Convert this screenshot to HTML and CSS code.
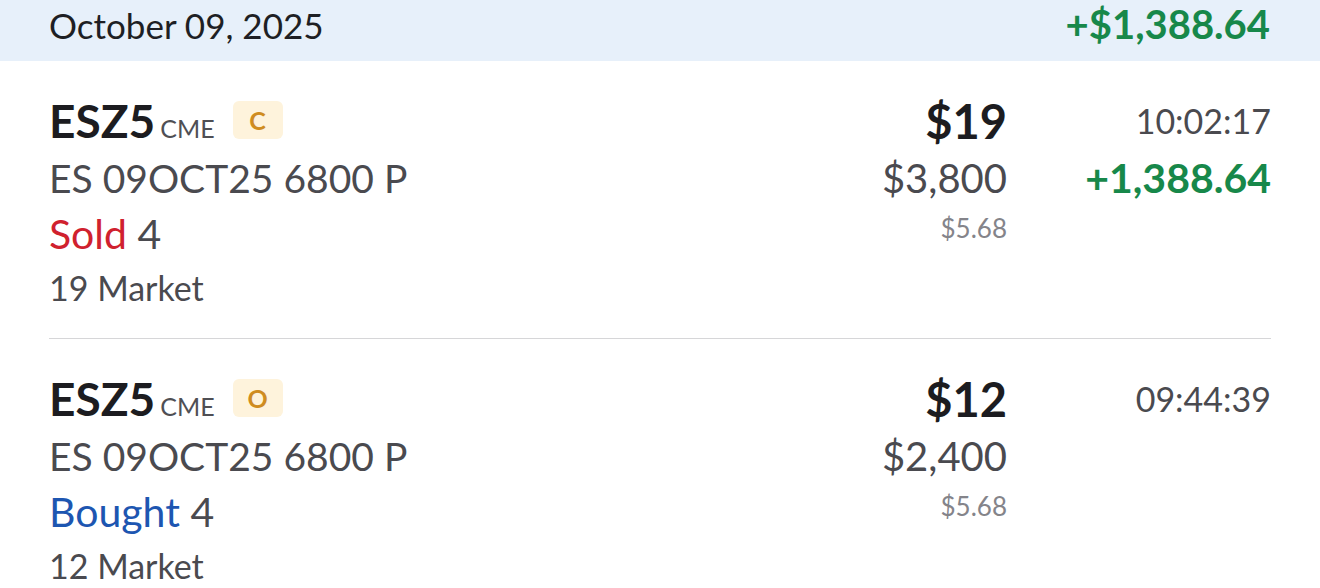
FILE: index.html
```html
<!DOCTYPE html>
<html lang="en">
<head>
<meta charset="utf-8">
<title>Orders</title>
<link rel="stylesheet" href="styles.css">
</head>
<body>
<div class="day-header">
  <span class="day-date">October 09, 2025</span>
  <span class="day-total">+$1,388.64</span>
</div>
<div class="orders">
  <div class="order">
    <div class="col-main">
      <div class="title-line">
        <span class="sym-group"><b class="sym">ESZ5</b><span class="exch">CME</span></span>
        <span class="badge">C</span>
      </div>
      <div class="desc">ES 09OCT25 6800 P</div>
      <div class="side"><span class="sold">Sold</span> 4</div>
      <div class="type">19 Market</div>
    </div>
    <div class="col-price">
      <div class="price">$19</div>
      <div class="amount">$3,800</div>
      <div class="fee">$5.68</div>
    </div>
    <div class="col-time">
      <div class="time">10:02:17</div>
      <div class="pnl">+1,388.64</div>
    </div>
  </div>
  <div class="order">
    <div class="col-main">
      <div class="title-line">
        <span class="sym-group"><b class="sym">ESZ5</b><span class="exch">CME</span></span>
        <span class="badge">O</span>
      </div>
      <div class="desc">ES 09OCT25 6800 P</div>
      <div class="side"><span class="bought">Bought</span> 4</div>
      <div class="type">12 Market</div>
    </div>
    <div class="col-price">
      <div class="price">$12</div>
      <div class="amount">$2,400</div>
      <div class="fee">$5.68</div>
    </div>
    <div class="col-time">
      <div class="time">09:44:39</div>
    </div>
  </div>
</div>
</body>
</html>
```
FILE: styles.css
```css
* { box-sizing: border-box; }
html, body { margin: 0; padding: 0; background: #ffffff; }
body {
  font-family: Lato, "Noto Sans", "Liberation Sans", sans-serif;
  color: #4a4a4f;
  width: 1320px;
  height: 588px;
  overflow: hidden;
}
.day-header {
  height: 61px;
  background: #e7f0fa;
  display: flex;
  justify-content: space-between;
  align-items: baseline;
  padding: 4px 50px 0 49px;
}
.day-date {
  font-size: 35px;
  line-height: 1;
  color: #1e1f24;
}
.day-total {
  font-size: 40px;
  line-height: 1;
  font-weight: 700;
  color: #17884a;
}
.orders {
  padding: 0 49px 0 49px;
}
.order {
  display: grid;
  grid-template-columns: 1fr auto 264px;
  padding: 31px 0 24px 0;
  border-bottom: 1px solid #d6d6d8;
}
.title-line {
  height: 58px;
  display: flex;
  align-items: center;
}
.sym-group {
  font-size: 46px;
  line-height: 1;
}
.sym {
  font-weight: 700;
  color: #1c1c20;
}
.exch {
  font-size: 25px;
  margin-left: 5px;
  color: #4f4f54;
}
.badge {
  margin-left: 18px;
  width: 50px;
  height: 38px;
  border-radius: 6px;
  background: #fef3dc;
  color: #cf8c20;
  font-size: 25px;
  font-weight: 700;
  display: flex;
  align-items: center;
  justify-content: center;
  margin-top: -2px;
}
.desc {
  font-size: 39px;
  line-height: 56px;
  color: #4a4a4f;
}
.side {
  font-size: 41px;
  line-height: 56px;
  color: #4a4a4f;
}
.sold { color: #d0212e; }
.bought { color: #1d56b1; }
.type {
  font-size: 34px;
  line-height: 52px;
  color: #4a4a4f;
}
.col-price {
  text-align: right;
}
.price {
  font-size: 47px;
  line-height: 58px;
  font-weight: 700;
  color: #1c1c20;
}
.amount {
  font-size: 40px;
  line-height: 56px;
  color: #4a4a4f;
}
.fee {
  font-size: 26px;
  line-height: 44px;
  color: #84848a;
}
.col-time {
  text-align: right;
}
.time {
  font-size: 34px;
  line-height: 58px;
  color: #4a4a4f;
}
.pnl {
  font-size: 41px;
  line-height: 56px;
  font-weight: 700;
  color: #17884a;
}
```
